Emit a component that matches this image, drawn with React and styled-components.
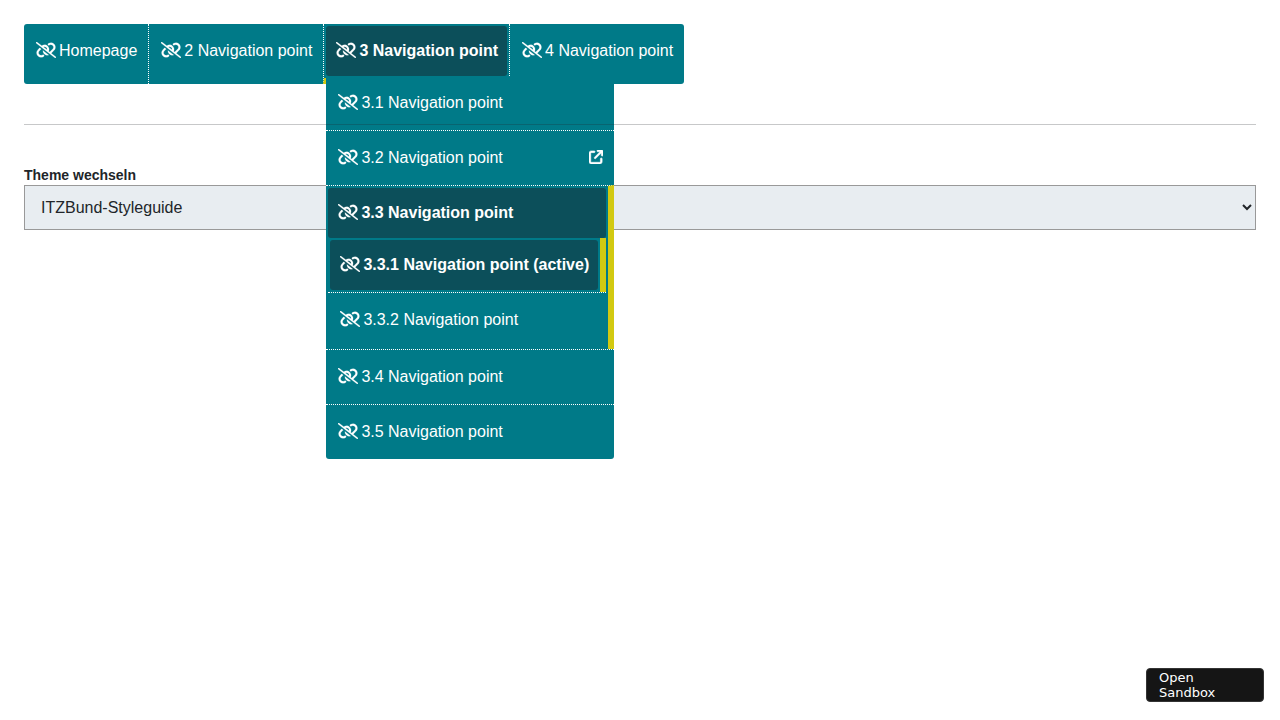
import React from "react";
import styled, { createGlobalStyle, css } from "styled-components";
import { FaLinkSlash, FaArrowUpRightFromSquare } from "react-icons/fa6";

const GlobalStyle = createGlobalStyle`
  *, *::before, *::after { box-sizing: border-box; }
  body {
    margin: 0;
    background: #fff;
    color: #212529;
    font: 16px/24px "Liberation Sans", Arial, sans-serif;
  }
`;

const teal = "#007a88";
const petrol = "#0c4f5a";
const yellow = "#d2c911";

const Page = styled.main`
  min-height: 100vh;
  padding: 24px;
`;

const MenuBar = styled.ul`
  display: flex;
  width: fit-content;
  margin: 0;
  padding: 0;
  list-style: none;
  background: ${teal};
  border-radius: 3px;
`;

const MenuItem = styled.li`
  position: relative;
  padding-bottom: ${(p) => (p.$current ? "0" : "6px")};
  border-bottom: ${(p) => (p.$current ? `6px solid ${yellow}` : "0")};

  & + & {
    border-left: 1px dotted #fff;
  }
`;

const NavLink = styled.a`
  display: flex;
  align-items: center;
  gap: 3px;
  height: 50px;
  margin: 2px;
  padding: 0 9px 0 10px;
  border-radius: 3px;
  color: #fff;
  text-decoration: none;
  white-space: nowrap;

  ${(p) =>
    p.$current &&
    css`
      background: ${petrol};
      font-weight: bold;
    `}
  ${(p) =>
    p.$open &&
    css`
      margin-bottom: 0;
    `}
`;

const iconStyle = css`
  flex: none;
  margin-bottom: 2px;
  stroke: currentColor;
`;

const LinkIcon = styled(FaLinkSlash)`
  ${iconStyle}
  width: 20px;
  height: 16px;
  stroke-width: 6px;
`;

const ExternalIcon = styled(FaArrowUpRightFromSquare)`
  ${iconStyle}
  width: 14px;
  height: 14px;
  margin-left: auto;
  stroke-width: 20px;
`;

const SubMenu = styled.ul`
  position: absolute;
  top: 52px;
  left: 2px;
  z-index: 1;
  width: 288px;
  margin: 0;
  padding: 0;
  list-style: none;
  background: ${teal};
  border-radius: 0 0 3px 3px;
`;

const NestedMenu = styled.ul`
  margin: 0 2px 2px;
  padding: 0;
  list-style: none;
`;

const SubItem = styled.li`
  display: flow-root;
  border-right: ${(p) => (p.$current ? `6px solid ${yellow}` : "0")};

  & + & {
    border-top: 1px dotted #fff;
  }
`;

const Divider = styled.hr`
  position: relative;
  z-index: 2;
  height: 1px;
  margin: 40px 0;
  border: 0;
  background: #212529;
  opacity: 0.25;
`;

const Label = styled.label`
  display: block;
  font-size: 14px;
  font-weight: bold;
  line-height: 20px;
`;

const Select = styled.select`
  display: block;
  width: 100%;
  height: 45px;
  padding: 0 0 0 12px;
  border: 1px solid #999;
  border-radius: 0;
  background: #e8edf1;
  color: #212529;
  font: inherit;
`;

const SandboxButton = styled.button`
  position: fixed;
  right: 16px;
  bottom: 18px;
  width: 118px;
  padding: 1px 12px;
  border: 1px solid #343434;
  border-radius: 4px;
  background: #151515;
  color: #fff;
  font: 13px/15px "DejaVu Sans", Verdana, sans-serif;
  text-align: left;
`;

function Entry({ label, current, open, external }) {
  return (
    <NavLink href="#" $current={current} $open={open} aria-current={current || undefined}>
      <LinkIcon aria-hidden="true" />
      <span>{label}</span>
      {external && <ExternalIcon aria-hidden="true" />}
    </NavLink>
  );
}

export default function App() {
  return (
    <>
      <GlobalStyle />
      <Page>
        <nav>
          <MenuBar>
            <MenuItem>
              <Entry label="Homepage" />
            </MenuItem>
            <MenuItem>
              <Entry label="2 Navigation point" />
            </MenuItem>
            <MenuItem $current>
              <Entry label="3 Navigation point" current />
              <SubMenu>
                <SubItem>
                  <Entry label="3.1 Navigation point" />
                </SubItem>
                <SubItem>
                  <Entry label="3.2 Navigation point" external />
                </SubItem>
                <SubItem $current>
                  <Entry label="3.3 Navigation point" current open />
                  <NestedMenu>
                    <SubItem $current>
                      <Entry label="3.3.1 Navigation point (active)" current />
                    </SubItem>
                    <SubItem>
                      <Entry label="3.3.2 Navigation point" />
                    </SubItem>
                  </NestedMenu>
                </SubItem>
                <SubItem>
                  <Entry label="3.4 Navigation point" />
                </SubItem>
                <SubItem>
                  <Entry label="3.5 Navigation point" />
                </SubItem>
              </SubMenu>
            </MenuItem>
            <MenuItem>
              <Entry label="4 Navigation point" />
            </MenuItem>
          </MenuBar>
        </nav>
        <Divider />
        <Label htmlFor="theme">Theme wechseln</Label>
        <Select id="theme" defaultValue="itzbund">
          <option value="itzbund">ITZBund-Styleguide</option>
        </Select>
      </Page>
      <SandboxButton type="button">Open Sandbox</SandboxButton>
    </>
  );
}
